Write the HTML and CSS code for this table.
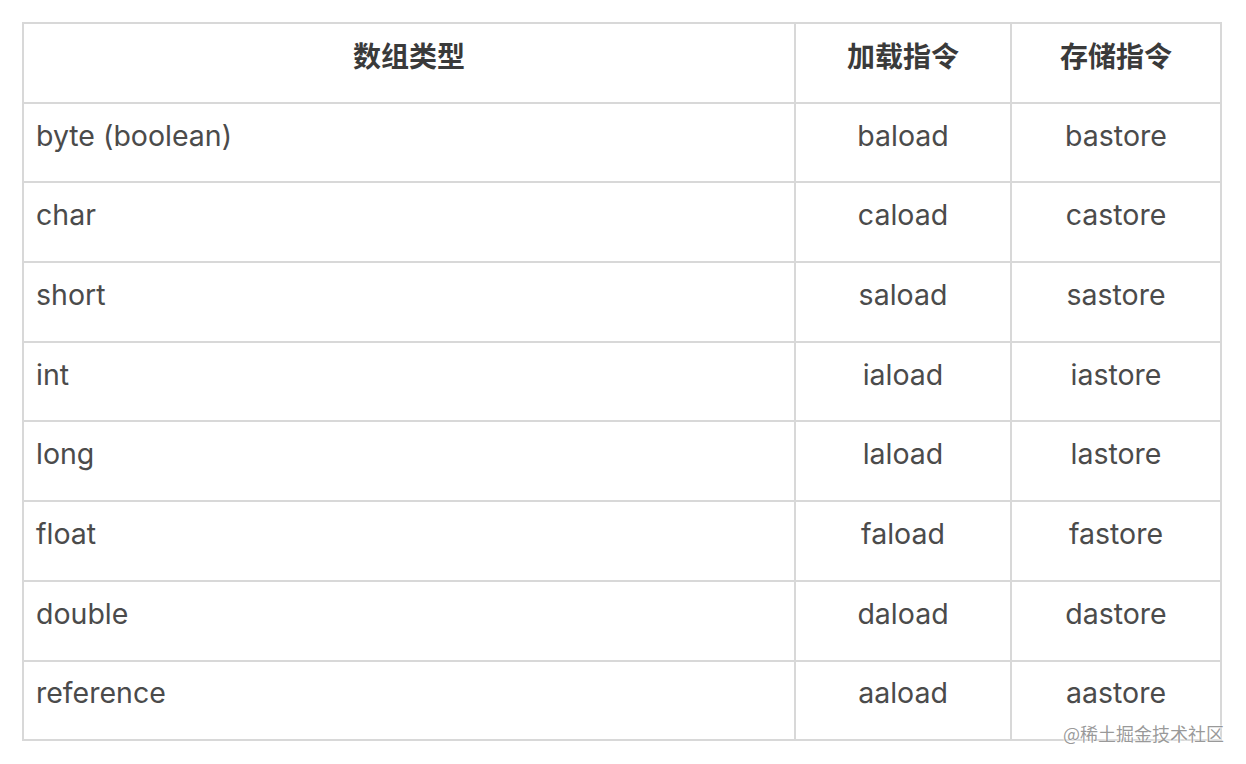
FILE: index.html
```html
<!DOCTYPE html>
<html lang="zh">
<head>
<meta charset="utf-8">
<title>数组类型</title>
<link rel="stylesheet" href="styles.css">
</head>
<body>
<div class="page">
  <div class="table">
    <div class="cell head">数组类型</div>
    <div class="cell head">加载指令</div>
    <div class="cell head">存储指令</div>

    <div class="cell left">byte (boolean)</div>
    <div class="cell">baload</div>
    <div class="cell">bastore</div>

    <div class="cell left">char</div>
    <div class="cell">caload</div>
    <div class="cell">castore</div>

    <div class="cell left">short</div>
    <div class="cell">saload</div>
    <div class="cell">sastore</div>

    <div class="cell left">int</div>
    <div class="cell">iaload</div>
    <div class="cell">iastore</div>

    <div class="cell left">long</div>
    <div class="cell">laload</div>
    <div class="cell">lastore</div>

    <div class="cell left">float</div>
    <div class="cell">faload</div>
    <div class="cell">fastore</div>

    <div class="cell left">double</div>
    <div class="cell">daload</div>
    <div class="cell">dastore</div>

    <div class="cell left">reference</div>
    <div class="cell">aaload</div>
    <div class="cell">aastore</div>
  </div>
  <div class="watermark">@稀土掘金技术社区</div>
</div>
</body>
</html>
```

FILE: styles.css
```css
html, body {
  margin: 0;
  padding: 0;
  background: #ffffff;
}

.page {
  position: relative;
  width: 1246px;
  height: 764px;
  padding: 22px 0 0 22px;
  box-sizing: border-box;
}

.table {
  display: grid;
  grid-template-columns: 770px 214px 208px;
  grid-auto-rows: 77.7px;
  gap: 2px;
  padding: 2px;
  width: 1200px;
  box-sizing: border-box;
  background: #d8d8d8;
  font-family: "Inter", "Noto Sans CJK SC", sans-serif;
  font-size: 28.5px;
  color: #4b4b4b;
}

.cell {
  background: #ffffff;
  display: flex;
  align-items: center;
  justify-content: center;
  padding: 0 12px 15px;
  box-sizing: border-box;
  white-space: nowrap;
}

.cell.left {
  justify-content: flex-start;
}

.cell.head {
  font-family: "Noto Sans CJK SC", sans-serif;
  font-weight: 700;
  color: #3a3a3a;
  font-size: 28px;
}

.watermark {
  position: absolute;
  right: 22px;
  bottom: 20px;
  font-family: "Noto Sans CJK SC", sans-serif;
  font-size: 18px;
  line-height: 22px;
  color: rgba(120, 120, 120, 0.75);
  text-shadow: 0 0 2px #ffffff, 0 0 2px #ffffff;
}
```
